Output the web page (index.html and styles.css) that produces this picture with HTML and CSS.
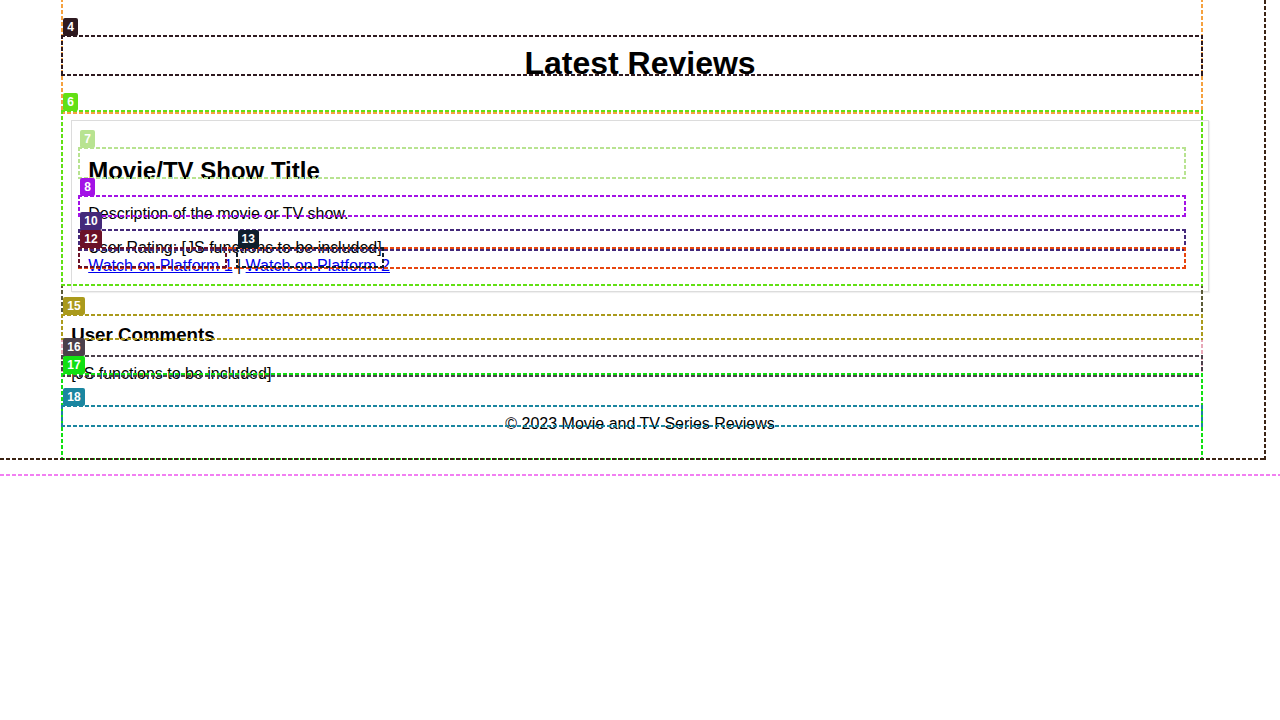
FILE: index.html
```html
<!DOCTYPE html>
<html lang="en">
<head>
<meta charset="utf-8">
<title>Movie and TV Series Reviews</title>
<link rel="stylesheet" href="styles.css">
</head>
<body>
<header class="wrap site-header dbg c3">
  <h1 class="dbg c4"><span class="tag">4</span>Latest Reviews</h1>
</header>
<main class="wrap dbg c5">
  <article class="card dbg c6"><span class="tag">6</span>
    <h2 class="dbg c7"><span class="tag">7</span>Movie/TV Show Title</h2>
    <p class="dbg c8"><span class="tag">8</span>Description of the movie or TV show.</p>
    <div class="review-meta">
      <div class="dbg c10"><span class="tag">10</span>User Rating: [JS functions to be included]</div>
      <div class="links dbg c11"><a href="#" class="dbg c12"><span class="tag">12</span>Watch on Platform 1</a> | <a href="#" class="dbg c13"><span class="tag">13</span>Watch on Platform 2</a></div>
    </div>
  </article>
  <section class="comments dbg c14">
    <h3 class="dbg c15"><span class="tag">15</span>User Comments</h3>
    <div class="dbg c16"><span class="tag">16</span>[JS functions to be included]</div>
  </section>
</main>
<footer class="wrap site-footer dbg c17"><span class="tag">17</span>
  <p class="dbg c18"><span class="tag">18</span>© 2023 Movie and TV Series Reviews</p>
</footer>
</body>
</html>
```
FILE: styles.css
```css
html {
  position: relative;
}

/* html outline (bottom edge) */
html::before {
  content: "";
  position: absolute;
  left: 0;
  right: 0;
  bottom: -2px;
  height: 2px;
  pointer-events: none;
  background: repeating-linear-gradient(90deg, #f27ff2 0 4px, transparent 4px 6px);
}

/* body outline (right and bottom edges) */
html::after {
  content: "";
  position: absolute;
  top: 0;
  left: 0;
  right: 14px;
  bottom: 14px;
  z-index: 1;
  pointer-events: none;
  background:
    repeating-linear-gradient(90deg, #3b2314 0 4px, transparent 4px 6px) left bottom / 100% 2px no-repeat,
    repeating-linear-gradient(180deg, #3b2314 0 4px, transparent 4px 6px) right top / 2px 100% no-repeat;
}

body {
  margin: 0;
  padding: 8px;
  font-family: "Liberation Sans", Arial, sans-serif;
  font-size: 16px;
  color: #000;
}

.wrap {
  width: 90%;
  margin: 0 auto;
}

.site-header {
  padding: 16px 0;
  text-align: center;
}

.site-header h1 {
  margin: 21.44px 0;
  font-size: 32px;
  font-weight: bold;
}

.card {
  border: 1px solid #dcdcdc;
  padding: 16px;
  margin-bottom: 32px;
  box-shadow: 1px 1px 1px rgba(0, 0, 0, 0.06);
}

.card h2 {
  margin: 19.92px 0;
  font-size: 24px;
}

.card p {
  margin: 16px 0;
}

.links a {
  color: #0000ee;
}

.comments h3 {
  margin: 18.72px 0 19.72px;
  font-size: 18.72px;
}

.site-footer {
  padding: 16px 0 17px;
  text-align: center;
}

.site-footer p {
  margin: 16px 0;
}

/* debug overlay outlines */
.dbg {
  position: relative;
}

.dbg::before {
  content: "";
  position: absolute;
  top: -10px;
  left: -10px;
  right: 6px;
  bottom: 6px;
  z-index: 1;
  pointer-events: none;
  background:
    repeating-linear-gradient(90deg, var(--c) 0 4px, transparent 4px 6px) left top / 100% 2px no-repeat,
    repeating-linear-gradient(90deg, var(--c) 0 4px, transparent 4px 6px) left bottom / 100% 2px no-repeat,
    repeating-linear-gradient(180deg, var(--c) 0 4px, transparent 4px 6px) left top / 2px 100% no-repeat,
    repeating-linear-gradient(180deg, var(--c) 0 4px, transparent 4px 6px) right top / 2px 100% no-repeat;
}

.card::before {
  top: -11px;
  left: -11px;
  right: 5px;
  bottom: 5px;
}

.tag {
  position: absolute;
  top: -27px;
  left: -8px;
  z-index: 2;
  height: 18px;
  padding: 0 4px;
  border-radius: 2px;
  background: var(--c);
  color: #fff;
  font: bold 12px/18px "Liberation Sans", Arial, sans-serif;
  text-decoration: none;
  white-space: nowrap;
  text-align: left;
}

.card > .tag {
  top: -28px;
  left: -9px;
}

.c3 { --c: #f5a13f; }
.c4 { --c: #2e1a20; }
.c5 { --c: #5a5a36; }
.c6 { --c: #62e014; }
.c7 { --c: #b8e391; }
.c8 { --c: #a312e6; }
.c10 { --c: #44297a; }
.c11 { --c: #e8460f; }
.c12 { --c: #6b1127; }
.c13 { --c: #0f1f2c; }
.c14 { --c: #e8a8b8; }
.c15 { --c: #aa9a1c; }
.c16 { --c: #4b404b; }
.c17 { --c: #12e012; }
.c18 { --c: #1a86a0; }
```
